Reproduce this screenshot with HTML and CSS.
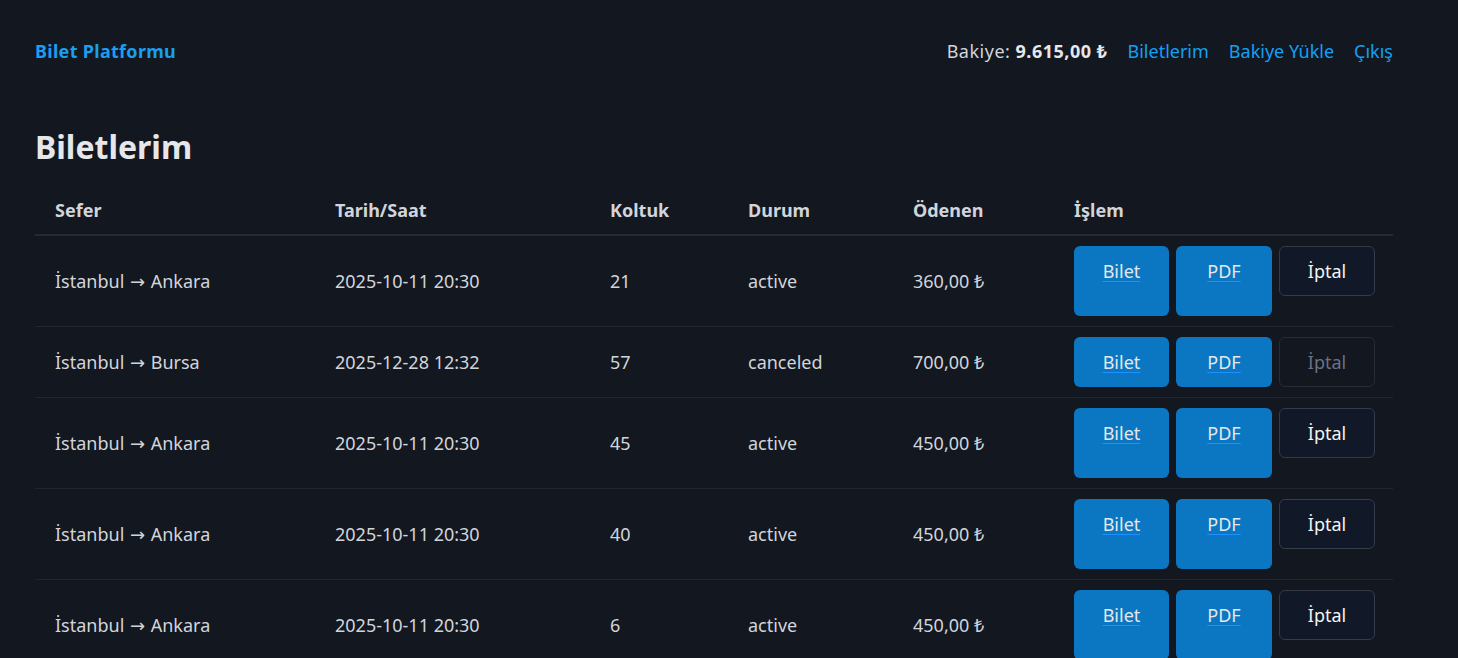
FILE: index.html
```html
<!DOCTYPE html>
<html lang="tr">
<head>
<meta charset="utf-8">
<title>Biletlerim</title>
<link rel="stylesheet" href="styles.css">
</head>
<body>
<div class="page">
  <header class="topbar">
    <a class="brand" href="#">Bilet Platformu</a>
    <nav class="nav">
      <span class="balance">Bakiye: <strong>9.615,00 ₺</strong></span>
      <a href="#">Biletlerim</a>
      <a href="#">Bakiye Yükle</a>
      <a href="#">Çıkış</a>
    </nav>
  </header>
  <h1 class="title">Biletlerim</h1>
  <table class="tickets">
    <thead>
      <tr>
        <th class="c-sefer">Sefer</th>
        <th class="c-tarih">Tarih/Saat</th>
        <th class="c-koltuk">Koltuk</th>
        <th class="c-durum">Durum</th>
        <th class="c-odenen">Ödenen</th>
        <th class="c-islem">İşlem</th>
      </tr>
    </thead>
    <tbody>
      <tr>
        <td>İstanbul <span class="arrow">→</span> Ankara</td><td>2025-10-11 20:30</td><td>21</td><td>active</td><td>360,00 ₺</td>
        <td><div class="actions"><a class="btn" href="#">Bilet</a><a class="btn btn-wide" href="#">PDF</a><form class="cancel-form"><button type="button" class="btn-cancel">İptal</button></form></div></td>
      </tr>
      <tr>
        <td>İstanbul <span class="arrow">→</span> Bursa</td><td>2025-12-28 12:32</td><td>57</td><td>canceled</td><td>700,00 ₺</td>
        <td><div class="actions"><a class="btn" href="#">Bilet</a><a class="btn btn-wide" href="#">PDF</a><button type="button" class="btn-cancel" disabled>İptal</button></div></td>
      </tr>
      <tr>
        <td>İstanbul <span class="arrow">→</span> Ankara</td><td>2025-10-11 20:30</td><td>45</td><td>active</td><td>450,00 ₺</td>
        <td><div class="actions"><a class="btn" href="#">Bilet</a><a class="btn btn-wide" href="#">PDF</a><form class="cancel-form"><button type="button" class="btn-cancel">İptal</button></form></div></td>
      </tr>
      <tr>
        <td>İstanbul <span class="arrow">→</span> Ankara</td><td>2025-10-11 20:30</td><td>40</td><td>active</td><td>450,00 ₺</td>
        <td><div class="actions"><a class="btn" href="#">Bilet</a><a class="btn btn-wide" href="#">PDF</a><form class="cancel-form"><button type="button" class="btn-cancel">İptal</button></form></div></td>
      </tr>
      <tr>
        <td>İstanbul <span class="arrow">→</span> Ankara</td><td>2025-10-11 20:30</td><td>6</td><td>active</td><td>450,00 ₺</td>
        <td><div class="actions"><a class="btn" href="#">Bilet</a><a class="btn btn-wide" href="#">PDF</a><form class="cancel-form"><button type="button" class="btn-cancel">İptal</button></form></div></td>
      </tr>
    </tbody>
  </table>
</div>
</body>
</html>
```
FILE: styles.css
```css
* { box-sizing: border-box; }
html, body {
  margin: 0;
  background: #131720;
}
body {
  font-family: "Noto Sans", "Open Sans", sans-serif;
  font-size: 18px;
  line-height: 26px;
  color: #d1d5db;
}
.page {
  padding: 38px 65px 0 35px;
}
.topbar {
  display: flex;
  justify-content: space-between;
  align-items: center;
}
.brand {
  color: #1a9ff0;
  font-weight: 700;
  letter-spacing: 0.3px;
  text-decoration: none;
}
.nav {
  display: flex;
  gap: 20px;
  align-items: center;
}
.nav a {
  color: #12a0f5;
  text-decoration: none;
}
.balance {
  letter-spacing: 0.5px;
}
.balance strong {
  color: #e5e7eb;
  font-weight: 700;
}
.title {
  margin: 63px 0 19px;
  font-size: 32px;
  line-height: 40px;
  font-weight: 700;
  color: #e5e7eb;
}
.tickets {
  width: 100%;
  border-collapse: collapse;
  table-layout: fixed;
}
.tickets th {
  text-align: left;
  font-weight: 700;
  padding: 11px 20px;
  border-bottom: 2px solid #262a36;
  color: #d1d5db;
}
.c-sefer { width: 280px; }
.c-tarih { width: 275px; }
.c-koltuk { width: 138px; }
.c-durum { width: 165px; }
.c-odenen { width: 161px; }
.c-islem { width: auto; }
.tickets td {
  padding: 10px 20px;
  border-bottom: 1px solid #222632;
  vertical-align: middle;
  color: #d1d5db;
}
.arrow {
  font-family: "DejaVu Sans", sans-serif;
  font-size: 18px;
  margin: 0 1px;
}
.actions {
  display: flex;
  gap: 7px;
  margin-right: -10px;
}
.btn {
  display: block;
  flex: 0 0 95px;
  padding: 12px 0 12px;
  background: #0b77c2;
  border-radius: 6px;
  color: #e5e7eb;
  text-align: center;
  text-decoration: underline;
  text-decoration-color: #1e90ff;
  text-underline-offset: 3px;
}
.btn-wide {
  flex-basis: 96px;
}
.cancel-form {
  flex: 0 0 96px;
  margin: 0 0 20px;
}
.btn-cancel {
  display: block;
  flex: 0 0 96px;
  width: 96px;
  height: 50px;
  padding: 0;
  font: inherit;
  line-height: 26px;
  color: #f3f4f6;
  background: #111827;
  border: 1px solid #353b48;
  border-radius: 6px;
}
.btn-cancel:disabled {
  color: #6b7280;
  background: #131720;
  border-color: #262b36;
}
```
